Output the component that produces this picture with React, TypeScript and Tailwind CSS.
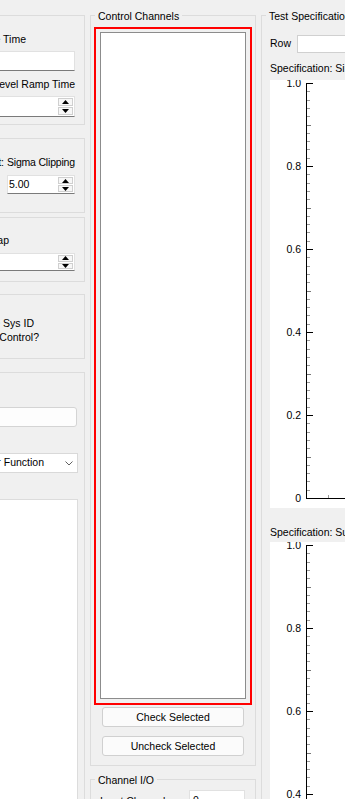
import React from 'react';

const lbl = 'h-[14px] leading-[14px] whitespace-nowrap';
const box = 'border border-[#dcdcdc]';

const Up = () => (
  <svg width="7" height="4" viewBox="0 0 7 4">
    <path d="M0 4 L3.5 0 L7 4 Z" fill="#000" />
  </svg>
);

const Down = () => (
  <svg width="7" height="4" viewBox="0 0 7 4">
    <path d="M0 0 L3.5 4 L7 0 Z" fill="#000" />
  </svg>
);

const Spin = ({ value, className }: { value?: string; className: string }) => {
  return (
    <div className={`flex bg-white border border-[#e1e1e1] border-b-[#7a7a7a] ${className}`}>
      <div className="flex-1 min-w-0 flex items-center pl-[1px] whitespace-nowrap overflow-hidden">{value}</div>
      <div className="flex flex-col shrink-0 w-[15px] my-[1px] mr-[1px] gap-[1px]">
        <div className="flex-1 flex items-center justify-center border border-[#cfcfcf] bg-[#f7f7f7]">
          <Up />
        </div>
        <div className="flex-1 flex items-center justify-center border border-[#cfcfcf] bg-[#f7f7f7]">
          <Down />
        </div>
      </div>
    </div>
  );
};

const Title = ({ children }: { children: React.ReactNode }) => (
  <div className="absolute left-[4px] top-[-7px] px-[3px] bg-[#f0f0f0] leading-[14px] whitespace-nowrap">
    {children}
  </div>
);

const Chart = ({ h, axisY }: { h: number; axisY?: number }) => {
  const top = 3;
  const step = 83;
  const labels = ['1.0', '0.8', '0.6', '0.4', '0.2', '0'];
  const ticks = [];
  for (let i = 0; i <= 50; i++) {
    const y = Math.round(top + (i * step) / 10) + 0.5;
    if (y > h || (axisY !== undefined && y > axisY + 1)) break;
    const major = i % 10 === 0;
    const mid = i % 5 === 0;
    ticks.push(
      <line
        key={i}
        x1={37}
        x2={37 + (major ? 6 : mid ? 4 : 3)}
        y1={y}
        y2={y}
        stroke={major ? '#000' : mid ? '#777' : '#999'}
      />
    );
  }
  const end = axisY !== undefined ? axisY + 1 : h;
  return (
    <svg width={200} height={h} className="block bg-white">
      <line x1={36.5} x2={36.5} y1={top} y2={end} stroke="#000" />
      {ticks}
      {axisY !== undefined && (
        <>
          <line x1={36} x2={200} y1={axisY + 0.5} y2={axisY + 0.5} stroke="#000" />
          <line x1={58.5} x2={58.5} y1={axisY - 3} y2={axisY} stroke="#999" />
        </>
      )}
      {labels.map((t, k) => {
        const y = top + k * step;
        if (y > h + 6) return null;
        return (
          <text
            key={t}
            x={31}
            y={y + 4}
            textAnchor="end"
            fontSize={10.5}
            fontFamily="Liberation Sans, Arial, sans-serif"
            fill="#000"
          >
            {t}
          </text>
        );
      })}
    </svg>
  );
};

export default function App() {
  return (
    <div className="flex w-[345px] h-[799px] overflow-hidden bg-[#f0f0f0] text-[10.5px] text-black font-['Liberation_Sans',Arial,sans-serif]">
      {/* left column, cut off at the window edge */}
      <div className="w-[85px] shrink-0 overflow-hidden">
        <div className="w-[120px] ml-[-35px] h-full flex flex-col">
          <div className={`shrink-0 mt-[15px] h-[110px] ${box} flex flex-col`}>
            <div className={`${lbl} mt-[16px] w-[60px] flex justify-end`}>Schedule Time</div>
            <div className="mt-[5px] h-[20px] mr-[9px] bg-white border border-[#e1e1e1] border-b-[#7a7a7a]" />
            <div className={`${lbl} mt-[6px] mr-[9px] flex justify-end`}>Level Ramp Time</div>
            <Spin className="mt-[5px] h-[21px] mr-[9px]" />
          </div>

          <div className={`shrink-0 mt-[13px] h-[75px] ${box} flex flex-col`}>
            <div className={`${lbl} mt-[16px] mr-[9px] flex`}>
              <div className="flex-1 min-w-0 flex justify-end">Abort Limit:</div>
              <div className="shrink-0 w-[68px] ml-[3px] tracking-[-0.2px]">Sigma Clipping</div>
            </div>
            <div className="mt-[6px] mr-[9px] flex">
              <Spin value="5.00" className="ml-auto w-[68px] h-[19px]" />
            </div>
          </div>

          <div className={`shrink-0 mt-[4px] h-[65px] ${box} flex flex-col`}>
            <div className={`${lbl} mt-[15px] w-[43px] flex justify-end`}>Overlap</div>
            <Spin className="mt-[6px] h-[18px] mr-[9px]" />
          </div>

          <div className={`shrink-0 mt-[12px] h-[65px] ${box} flex flex-col`}>
            <div className={`${lbl} mt-[21px] w-[68px] flex justify-end`}>Use Sys ID</div>
            <div className={`${lbl} w-[73px] flex justify-end`}>for Control?</div>
          </div>

          <div className={`mt-[13px] flex-1 ${box} border-b-0 flex flex-col`}>
            <div className="shrink-0 mt-[34px] h-[20px] mr-[7px] rounded-[3px] bg-[#fdfdfd] border border-[#d4d4d4]" />
            <div className="shrink-0 mt-[26px] h-[20px] mr-[6px] bg-white border border-[#d9d9d9] flex items-center">
              <div className="flex-1 min-w-0 flex justify-end whitespace-nowrap mr-[21px]">Transfer Function</div>
              <svg width="8" height="5" viewBox="0 0 8 5" className="shrink-0">
                <path d="M0.5 0.5 L4 4 L7.5 0.5" fill="none" stroke="#606060" strokeWidth="1" />
              </svg>
              <div className="shrink-0 w-[4px]" />
            </div>
            <div className="mt-[26px] flex-1 mr-[6px] bg-white border border-[#dcdcdc] border-b-0" />
          </div>
        </div>
      </div>

      {/* middle column */}
      <div className="ml-[5px] w-[166px] shrink-0 flex flex-col">
        <div className={`relative shrink-0 mt-[15px] h-[751px] ${box} flex flex-col`}>
          <Title>Control Channels</Title>
          <div className="shrink-0 mt-[11px] mx-[3px] h-[678px] border-2 border-[#ff0000] pt-[3px] px-[4px] pb-[4px] flex">
            <div className="flex-1 bg-white border border-[#8c8c8c]" />
          </div>
          <button className="shrink-0 mt-[2px] mx-[11px] h-[20px] rounded-[3px] border border-[#d0d0d0] bg-[#fbfbfb] leading-[18px]">
            Check Selected
          </button>
          <button className="shrink-0 mt-[9px] mx-[11px] h-[20px] rounded-[3px] border border-[#d0d0d0] bg-[#fbfbfb] leading-[18px]">
            Uncheck Selected
          </button>
        </div>

        <div className={`relative shrink-0 mt-[13px] h-[60px] ${box} border-b-0 flex flex-col`}>
          <Title>Channel I/O</Title>
          <div className="shrink-0 mt-[10px] flex items-center h-[20px]">
            <div className="ml-[9px] mt-[4px] whitespace-nowrap">Input Channels</div>
            <div className="ml-auto mr-[10px] w-[56px] h-[20px] bg-white border border-[#e1e1e1] border-b-[#7a7a7a] pl-[3px] leading-[18px]">
              0
            </div>
          </div>
        </div>
      </div>

      {/* right column */}
      <div className="ml-[5px] w-[200px] shrink-0 flex flex-col">
        <div className={`relative mt-[15px] flex-1 ${box} border-b-0 border-r-0 flex flex-col`}>
          <Title>Test Specification</Title>
          <div className="shrink-0 mt-[19px] ml-[8px] h-[18px] flex items-center">
            <div className="w-[27px]">Row</div>
            <div className="flex-1 h-[18px] bg-white border border-[#d0d0d0]" />
          </div>
          <div className={`${lbl} shrink-0 mt-[8px] ml-[8px]`}>Specification: Sine</div>
          <div className="shrink-0 mt-[5px] ml-[8px]">
            <Chart h={428} axisY={418} />
          </div>
          <div className={`${lbl} shrink-0 mt-[17px] ml-[8px]`}>Specification: Sum of Sines</div>
          <div className="mt-[3px] ml-[8px] flex-1 bg-white overflow-hidden">
            <Chart h={257} />
          </div>
        </div>
      </div>
    </div>
  );
}
